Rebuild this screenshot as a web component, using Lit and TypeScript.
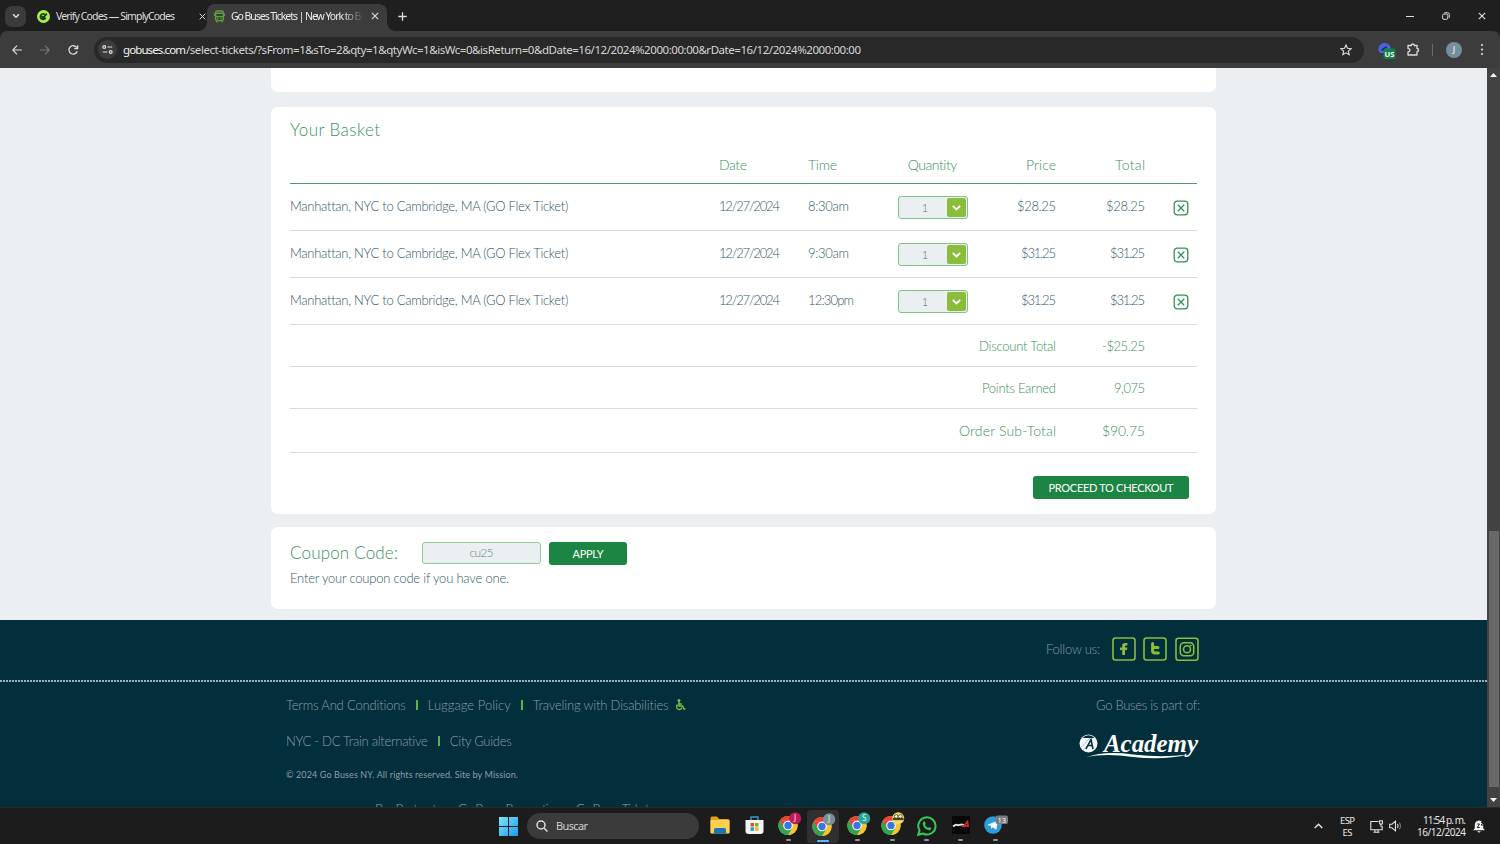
import { LitElement, html, svg, css } from "lit";
import { customElement, property } from "lit/decorators.js";

/** Inline text tracked so that it occupies a given advance width. */
@customElement("fit-text")
class FitText extends LitElement {
  @property({ type: Number }) w = 0;
  static styles = css`
    :host { display: inline-block; white-space: nowrap; flex: none; }
  `;
  render() { return html`<slot></slot>`; }
  firstUpdated() {
    const n = (this.textContent || "").trim().length;
    if (!this.w || n < 2) return;
    const natural = this.getBoundingClientRect().width;
    const ls = (this.w - natural) / (n - 1);
    this.style.letterSpacing = ls.toFixed(3) + "px";
    this.style.marginRight = (-ls).toFixed(3) + "px";
  }
}

const cross = svg`<path d="M1 1L9 9M9 1L1 9" stroke="currentColor" stroke-width="1.4" fill="none"/>`;

@customElement("browser-chrome")
class BrowserChrome extends LitElement {
  static styles = css`
    :host { display: block; height: 68px; flex: none; background: #1f1f1f; color: #dedede;
      font: 10.5px "Noto Sans", "Open Sans", sans-serif; }
    svg { display: block; flex: none; }
    .tabs { display: flex; height: 31px; align-items: center; padding-left: 5px; box-sizing: border-box; }
    .search { width: 21px; height: 21px; border-radius: 7px; background: #3b3b3b; display: grid; place-items: center; margin-top: 1px; }
    .tab { display: flex; align-items: center; height: 31px; padding-top: 1px; box-sizing: border-box; }
    .one { width: 180px; padding-left: 11px; }
    .one svg:first-child { margin-right: 6px; }
    .sp { flex: 1; }
    .two { width: 180px; height: 27px; margin-top: 4px; padding: 0 8px 3px 7px; background: #3c3c3c; border-radius: 8px 8px 0 0; margin-left: 1px; position: relative; }
    .two::before, .two::after { content: ""; position: absolute; bottom: 0; width: 8px; height: 8px; }
    .two::before { left: -8px; background: radial-gradient(circle at 0 0, transparent 7.5px, #3c3c3c 8px); }
    .two::after { right: -8px; background: radial-gradient(circle at 100% 0, transparent 7.5px, #3c3c3c 8px); }
    .title { width: 133px; overflow: hidden; margin-left: 6px; color: #ececec;
      -webkit-mask-image: linear-gradient(90deg, #000 112px, transparent 132px); }
    .plus { margin-left: 11px; margin-top: 1px; }
    .win { display: flex; align-items: center; gap: 28px; padding-right: 14px; }
    .bar { display: flex; height: 37px; background: #3c3c3c; align-items: center; border-radius: 7px 7px 0 0; padding-left: 12px; box-sizing: border-box; }
    .nav { display: flex; gap: 18px; }
    .omni { display: flex; align-items: center; height: 26px; width: 1270px; box-sizing: border-box; border-radius: 13px; background: #282828; margin-left: 15px; padding: 0 12px 0 4px; font-size: 11.5px; color: #d6d6d6; }
    .site { width: 19px; height: 19px; border-radius: 50%; background: #3c3c3c; display: grid; place-items: center; margin-right: 6px; }
    .host { color: #f4f4f4; }
    .ext { margin-left: 14px; }
    .puz { margin-left: 11px; }
    .sep { width: 1px; height: 12px; background: #6b6b6b; margin-left: 12px; }
    .me { width: 16px; height: 16px; border-radius: 50%; background: #758f9f; color: #fff; font-size: 9px; line-height: 16px; text-align: center; margin-left: 13px; }
    .dots { margin-left: 18px; }
  `;
  render() {
    return html`
      <div class="tabs">
        <div class="search"><svg width="8" height="6" viewBox="0 0 8 6"><path d="M1 1.2L4 4.2L7 1.2" stroke="#ddd" stroke-width="1.5" fill="none"/></svg></div>
        <div class="tab one">
          <svg width="13" height="13" viewBox="0 0 13 13"><circle cx="6.5" cy="6.5" r="6.5" fill="#a8f04d"/><path d="M7.6 4.4A2.7 2.7 0 1 0 8.6 7.7M4.7 6.2L6.2 7.7L9.8 3.6" stroke="#1c3312" stroke-width="1.7" fill="none"/></svg>
          <fit-text w="119">Verify Codes — SimplyCodes</fit-text><span class="sp"></span>
          <svg width="7" height="7" viewBox="0 0 10 10">${cross}</svg>
        </div>
        <div style="" class="gap"></div>
        <div class="tab two" id="active">
          <svg width="11" height="13" viewBox="0 0 11 13" fill="none" stroke="#5f9f38" stroke-width="1.4"><rect x="1.6" y="1" width="7.8" height="9.6" rx="1.6"/><path d="M1.6 3.2H9.4M1.6 6.6H9.4M.4 3.5V6M10.6 3.5V6M3 10.6V12.6M8 10.6V12.6M3.2 8.7H4.4M6.6 8.7H7.8"/></svg>
          <div class="title"><fit-text w="153">Go Buses Tickets | New York to Boston</fit-text></div><span class="sp"></span>
          <svg width="8" height="8" viewBox="0 0 10 10">${cross}</svg>
        </div>
        <svg class="plus" width="9" height="9" viewBox="0 0 9 9"><path d="M4.5 .3V8.7M.3 4.5H8.7" stroke="#ddd" stroke-width="1.3"/></svg>
        <span class="sp"></span>
        <div class="win">
          <svg width="8" height="8" viewBox="0 0 8 8"><path d="M0 4.5H8" stroke="#ddd"/></svg>
          <svg width="8" height="8" viewBox="0 0 8 8" fill="none" stroke="#ddd"><rect x=".6" y="2.1" width="5.2" height="5.2" rx="1.2"/><path d="M2.3 .7H5.6Q7.3 .7 7.3 2.4V5.7"/></svg>
          <svg width="8" height="8" viewBox="0 0 10 10">${cross}</svg>
        </div>
      </div>
      <div class="bar">
        <div class="nav">
          <svg width="10" height="10" viewBox="0 0 10 10" fill="none" stroke="#ddd" stroke-width="1.2"><path d="M10 5H.8M5 .7L.8 5L5 9.3"/></svg>
          <svg width="10" height="10" viewBox="0 0 10 10" fill="none" stroke="#777" stroke-width="1.2"><path d="M0 5H9.2M5 .7L9.2 5L5 9.3"/></svg>
          <svg width="11" height="10" viewBox="0 0 11 10" fill="none" stroke="#ddd" stroke-width="1.3"><path d="M8.7 2.6A4.2 4.2 0 1 0 9.2 6.2M9.6 .2V3.6H6.2"/></svg>
        </div>
        <div class="omni">
          <div class="site"><svg width="11" height="9" viewBox="0 0 11 9" fill="none" stroke="#ddd" stroke-width="1.2"><circle cx="2.2" cy="2" r="1.4"/><path d="M5.3 2H10.2M.8 7H5.4"/><circle cx="8.7" cy="7" r="1.4"/></svg></div>
          <fit-text w="63" class="host">gobuses.com</fit-text><fit-text w="675">/select-tickets/?sFrom=1&amp;sTo=2&amp;qty=1&amp;qtyWc=1&amp;isWc=0&amp;isReturn=0&amp;dDate=16/12/2024%2000:00:00&amp;rDate=16/12/2024%2000:00:00</fit-text>
          <span class="sp"></span>
          <svg width="12" height="12" viewBox="0 0 12 12"><path d="M6 1L7.5 4.3L11.1 4.7L8.4 7.1L9.2 10.7L6 8.8L2.8 10.7L3.6 7.1L.9 4.7L4.5 4.3Z" fill="none" stroke="#ddd" stroke-width="1.1"/></svg>
        </div>
        <svg class="ext" width="18" height="18" viewBox="0 0 18 18"><path d="M.5 9.5A6.3 6.3 0 0 1 12.9 7L11 12H2Z" fill="#4a63e0"/><path d="M4 9.5Q6 6.3 9 6.3" stroke="#242a4a" stroke-width="1.6" fill="none"/><rect x="5.5" y="7.5" width="12" height="10.5" rx="2" fill="#12804a"/><text x="11.5" y="15.7" text-anchor="middle" font-size="7.5" font-weight="700" fill="#fff">US</text></svg>
        <svg class="puz" width="13" height="13" viewBox="0 0 13 13"><path d="M1 2.5H4.3A1.5 1.5 0 0 1 7.3 2.5H10V5.5A1.5 1.5 0 0 1 10 8.6V12H1V9Q3 8.6 3 7.2Q3 5.8 1 5.4Z" fill="none" stroke="#ddd" stroke-width="1.3" stroke-linejoin="round"/></svg>
        <div class="sep"></div><div class="me">J</div>
        <svg class="dots" width="4" height="13" viewBox="0 0 4 13" fill="#ddd"><circle cx="2" cy="2" r="1.1"/><circle cx="2" cy="6.5" r="1.1"/><circle cx="2" cy="11" r="1.1"/></svg>
      </div>`;
  }
}

const tickets = [
  { time: "8:30am", tw: 41, price: "$28.25", pw: 39 },
  { time: "9:30am", tw: 41, price: "$31.25", pw: 35 },
  { time: "12:30pm", tw: 46, price: "$31.25", pw: 35 },
];

@customElement("basket-page")
class BasketPage extends LitElement {
  static styles = css`
    :host { display: flex; flex-direction: column; width: 1487px; height: 739px; overflow: hidden; background: #ebeff2; color: #32586a;
      font: 300 13px/18px Lato, "Open Sans", sans-serif; }
    svg { display: block; flex: none; }
    .card { width: 945px; margin-left: 271px; background: #fff; border-radius: 7px; box-sizing: border-box; padding: 0 19px; flex: none; }
    .prev { height: 24px; border-radius: 0 0 7px 7px; }
    .basket { height: 407px; margin-top: 15px; padding-top: 13px; }
    .coupon { height: 82px; margin-top: 13px; padding-top: 14px; }
    .h { font-size: 17px; line-height: 20px; color: #3b8f60; }
    .row { display: grid; grid-template-columns: 429px 89px 90px 69px 89px 89px 52px; height: 47px; box-sizing: border-box; border-bottom: 1px solid #d9dadb; align-items: center; }
    .row.head { height: 44px; margin-top: 0; border-color: #49996a; color: #3b8f60; font-size: 14px; padding-bottom: 0; }
    .row > * { padding-bottom: 2px; }
    .head > * { padding: 6px 0 0; }
    .r { text-align: right; } .c { text-align: center; }
    .row > .q { padding: 0; }
    .qty { display: flex; height: 23px; width: 70px; border: 1px solid #7cc588; border-radius: 3px; box-sizing: border-box; background: #ebeff2; padding: 1px; font-size: 11px; line-height: 20px; color: #3f7d6a; }
    .qty b { flex: 1; font-weight: 300; text-align: center; padding-left: 3px; }
    .qty i { width: 19px; background: #8cbd3a; display: grid; place-items: center; border-radius: 2px; padding-top: 1px; box-sizing: border-box; }
    .row > .del { justify-self: center; padding: 1px 0 0 19px; }
    .sum { display: grid; grid-template-columns: 766px 89px 52px; height: 42px; box-sizing: border-box; border-bottom: 1px solid #d9dadb; text-align: right; align-items: center; color: #3b8f60; }
    .sum.s1 { height: 42px; } .sum.big { height: 44px; font-size: 14px; }
    .btn { background: #1c8543; color: #fff; border-radius: 3px; display: grid; place-items: center; font-size: 11px; font-weight: 400; height: 23px; }
    .go { width: 156px; margin: 23px 0 0 743px; }
    .line { display: flex; align-items: center; height: 24px; }
    .code { width: 119px; height: 22px; box-sizing: border-box; border: 1px solid #8fcb98; border-radius: 3px; background: #ebeff2; text-align: center; font-size: 12px; line-height: 20px; margin-left: 24px; color: #5d8e87; }
    .line .btn { width: 78px; margin-left: 8px; margin-top: 1px; }
    .note { margin-top: 4px; line-height: 18px; }
    footer { background: #032e3c; flex: 1; margin-top: 11px; color: #8b9fa8; min-height: 0; }
    .follow { height: 60px; display: flex; align-items: center; box-sizing: border-box; padding: 0 288px 3px 0; justify-content: flex-end; }
    .follow svg { margin-left: 7px; }
    .dotted { height: 2px; background: repeating-linear-gradient(90deg, #9fb3bb 0 2px, transparent 2px 3px); }
    .cols { display: flex; justify-content: space-between; padding: 14px 287px 0 286px; }
    .ln { display: flex; align-items: center; height: 18px; margin-bottom: 18px; }
    .ln hr { width: 2px; height: 10px; background: #5fb347; border: 0; margin: 0 10px; }
    .ln svg { margin-left: 6px; }
    .copy { font-size: 9px; line-height: 14px; margin-top: 1px; font-weight: 400; }
    .cut { display: flex; gap: 15px; padding-left: 89px; margin-top: 19px; line-height: 16px; }
    .part { text-align: right; }
    .logo { margin-top: 17px; }
  `;
  render() {
    const ft = (t: string, w: number) => html`<fit-text w=${w}>${t}</fit-text>`;
    return html`
      <div class="card prev"></div>
      <div class="card basket">
        <div class="h">${ft("Your Basket", 90)}</div>
        <div class="row head"><span></span><span>${ft("Date", 28)}</span><span>${ft("Time", 29)}</span><span class="c">${ft("Quantity", 50)}</span><span class="r">${ft("Price", 30)}</span><span class="r">${ft("Total", 30)}</span></div>
        ${tickets.map((t) => html`<div class="row">
          <span>${ft("Manhattan, NYC to Cambridge, MA (GO Flex Ticket)", 278)}</span>
          <span>${ft("12/27/2024", 61)}</span><span>${ft(t.time, t.tw)}</span>
          <span class="q"><div class="qty"><b>1</b><i><svg width="9" height="6" viewBox="0 0 9 6"><path d="M.8 .9L4.5 4.4L8.2 .9" stroke="#fff" stroke-width="1.8" fill="none"/></svg></i></div></span>
          <span class="r">${ft(t.price, t.pw)}</span><span class="r">${ft(t.price, t.pw)}</span>
          <span class="del"><svg width="16" height="16" viewBox="0 0 16 16" fill="none" stroke="#2f9257" stroke-width="1.3"><rect x="1.2" y="1.2" width="13.6" height="13.6" rx="3"/><path d="M4.8 4.8L11.2 11.2M11.2 4.8L4.8 11.2"/></svg></span>
        </div>`)}
        <div class="sum"><span>${ft("Discount Total", 77)}</span><span>${ft("-$25.25", 43)}</span></div>
        <div class="sum"><span>${ft("Points Earned", 74)}</span><span>${ft("9,075", 31)}</span></div>
        <div class="sum big"><span>${ft("Order Sub-Total", 97)}</span><span>${ft("$90.75", 43)}</span></div>
        <div class="btn go">${ft("PROCEED TO CHECKOUT", 125)}</div>
      </div>
      <div class="card coupon">
        <div class="line"><span class="h">${ft("Coupon Code:", 108)}</span><div class="code">${ft("cu25", 24)}</div><div class="btn">${ft("APPLY", 31)}</div></div>
        <div class="note">${ft("Enter your coupon code if you have one.", 219)}</div>
      </div>
      <footer>
        <div class="follow">${ft("Follow us:", 54)}
          <svg width="24" height="24" viewBox="0 0 24 24" style="margin-left:12px"><rect x="1" y="1" width="22" height="22" rx="2.5" fill="none" stroke="#8cbd3a" stroke-width="1.6"/><path d="M10.2 18V12.9H8V10.4H10.2V8.8Q10.2 6 13 6H15.4V8.5H13.9Q13 8.5 13 9.4V10.4H15.3L15 12.9H13V18Z" fill="#8cbd3a"/></svg>
          <svg width="24" height="24" viewBox="0 0 24 24"><rect x="1" y="1" width="22" height="22" rx="2.5" fill="none" stroke="#8cbd3a" stroke-width="1.6"/><path d="M9.6 6.5V13.7Q9.6 16 12 16H15.3M9.6 10.4H15" stroke="#8cbd3a" stroke-width="3" fill="none" stroke-linecap="round"/></svg>
          <svg width="25" height="24" viewBox="0 0 25 24" fill="none" stroke="#8cbd3a"><rect x="2" y="1.3" width="22" height="22" rx="2.5" stroke-width="1.6"/><rect x="6.3" y="5.7" width="13.4" height="13" rx="3.5" stroke-width="1.6"/><circle cx="13" cy="12.2" r="3.5" stroke-width="1.6"/><circle cx="16.8" cy="8.6" r=".6"/></svg>
        </div>
        <div class="dotted"></div>
        <div class="cols">
          <div>
            <div class="ln">${ft("Terms And Conditions", 120)}<hr>${ft("Luggage Policy", 83)}<hr>${ft("Traveling with Disabilities", 136)}<svg width="11" height="12" viewBox="0 0 11 12" fill="none" stroke="#7fc242" stroke-width="1.4"><circle cx="4" cy="1.6" r=".8" fill="#7fc242"/><path d="M4 3V7H7.6L9 10H10.4M4 5H6.8M2.6 5.6A2.8 2.8 0 1 0 7 8.8"/></svg></div>
            <div class="ln">${ft("NYC - DC Train alternative", 142)}<hr>${ft("City Guides", 62)}</div>
            <div class="copy">${ft("© 2024 Go Buses NY. All rights reserved. Site by Mission.", 232)}</div>
            <div class="cut">${ft("Bus Boston to", 68)}${ft("Go Buses Reservation", 103)}${ft("Go Buses Tickets", 78)}</div>
          </div>
          <div class="part">${ft("Go Buses is part of:", 104)}
            <svg class="logo" width="122" height="32" viewBox="0 0 122 32">
              <circle cx="10.5" cy="12.5" r="9" fill="#f4f8fa"/><path d="M3.5 16L13 6M5.5 18.5L14 9" stroke="#8fa5af" stroke-width=".7"/><path d="M4.5 7A8 8 0 0 1 16.5 7Z" fill="#032e3c"/><path d="M8 18L13 8.5L15 18M10 14.5H14.5" stroke="#032e3c" stroke-width="1.6" fill="none"/>
              <text x="26" y="21" textLength="94" lengthAdjust="spacingAndGlyphs" font-family="Liberation Serif, serif" font-weight="700" font-style="italic" font-size="25" fill="#fff">Academy</text>
              <path d="M8 26.5Q26 19.5 55 23.5Q85 27 110 23.5Q86 29.5 55 26Q26 22 8 26.5Z" fill="#fff"/>
            </svg>
          </div>
        </div>
      </footer>`;
  }
}

const chromeIcon = (badge: string, letter: string) => html`<svg width="26" height="26" viewBox="0 0 26 26">
  <circle cx="10" cy="14.5" r="9.6" fill="#f9c52c"/>
  <path d="M1.7 9.7A9.6 9.6 0 0 1 18.3 9.7H10Z" fill="#e5443a"/>
  <path d="M1.7 9.7A9.6 9.6 0 0 0 10 24.1L14.2 17Q10 21 5.9 17Z" fill="#35a452"/>
  <path d="M10 9.7H18.3A9.6 9.6 0 0 1 10 24.1L14.2 17Z" fill="#f9c52c"/>
  <path d="M1.7 9.7L5.9 17L10 9.7Z" fill="#e5443a"/><path d="M1.7 9.7A9.6 9.6 0 0 0 10 24.1L14.2 17L5.9 17Z" fill="#35a452"/>
  <circle cx="10" cy="14.5" r="4.8" fill="#fff"/><circle cx="10" cy="14.5" r="3.7" fill="#3478e5"/>
  <circle cx="17.2" cy="7.2" r="6" fill=${badge}/><text x="17.2" y="10.2" text-anchor="middle" font-size="8" fill="#e6eef0">${letter}</text>
  ${letter ? "" : svg`<path d="M11.8 8H22.6" stroke="#4a3c20" stroke-width="2.2"/><circle cx="15.2" cy="5.4" r="1.8" fill="#fff" stroke="#3b331d" stroke-width=".8"/><circle cx="19.3" cy="5.4" r="1.8" fill="#fff" stroke="#3b331d" stroke-width=".8"/>`}
</svg>`;

@customElement("task-bar")
class TaskBar extends LitElement {
  static styles = css`
    :host { display: flex; height: 37px; flex: none; background: #1c1c1c; color: #e6e6e6; font: 10px/12px "Noto Sans", "Open Sans", sans-serif; box-sizing: border-box; padding-left: 499px; border-top: 1px solid #292b2b; align-items: center; }
    svg { display: block; flex: none; }
    .find { display: flex; align-items: center; width: 172px; height: 26px; border-radius: 13px; background: #3b3b3b; margin: 0 4px 0 9px; padding-left: 9px; box-sizing: border-box; gap: 8px; font-size: 11px; color: #d0d0d0; }
    .app { width: 34.4px; height: 36px; flex: none; display: flex; flex-direction: column; align-items: center; justify-content: space-between; padding: 3px 0 3px; box-sizing: border-box; }
    .app.plain { padding-top: 8px; }
    .app.on { background: radial-gradient(#333, #303030); background: #303030; height: 33px; border-radius: 4px; padding: 2px 0 1px; width: 32px; margin: 0 1.2px; }
    .app::after { content: ""; width: 5px; height: 2px; border-radius: 1px; background: #989898; }
    .app.on::after { width: 12px; background: #5cb8f0; }
    .app.none::after { display: none; }
    .app .c { margin-left: 4px; }
    .sp { flex: 1; }
    .lang { margin: 0 15px 0 17px; text-align: center; font-size: 9.5px; padding-top: 1px; }
    .clock { text-align: right; margin: 0 7px 0 14px; }
    .spk { margin-left: 6px; }
    .bell { margin-right: 15px; }
  `;
  render() {
    return html`
      <svg width="19" height="19" viewBox="0 0 19 19"><defs><linearGradient id="w" x2="1" y2="1"><stop stop-color="#7fe3fa"/><stop offset="1" stop-color="#1b9ce8"/></linearGradient></defs><path d="M0 0H9V9H0ZM10 0H19V9H10ZM0 10H9V19H0ZM10 10H19V19H10Z" fill="url(#w)"/></svg>
      <div class="find"><svg width="12" height="12" viewBox="0 0 12 12" fill="none" stroke="#ddd" stroke-width="1.5"><circle cx="5" cy="5" r="4"/><path d="M8 8L11.5 11.5"/></svg><fit-text w="32">Buscar</fit-text></div>
      <div class="app plain none"><svg width="20" height="18" viewBox="0 0 20 18"><path d="M.5 2Q.5 .5 2 .5H7L9 3H18Q19.5 3 19.5 4.5V17H.5Z" fill="#e0a31d"/><rect x=".5" y="4" width="19" height="13.5" rx="1" fill="#fdcf52"/><path d="M4 17.5V13.5Q4 12 5.5 12H14.5Q16 12 16 13.5V17.5Z" fill="#1976b8"/></svg></div>
      <div class="app plain none"><svg width="19" height="18" viewBox="0 0 19 18"><path d="M6 4V1H13V4" stroke="#2e9ad0" stroke-width="1.4" fill="none"/><path d="M.5 4H18.5V15Q18.5 18 15.5 18H3.5Q.5 18 .5 15Z" fill="#f3f5f7"/><path d="M5.5 7H9V10.5H5.5Z" fill="#e65028"/><path d="M10 7H13.5V10.5H10Z" fill="#7cb518"/><path d="M5.5 11.3H9V14.8H5.5Z" fill="#1f9be0"/><path d="M10 11.3H13.5V14.8H10Z" fill="#f6b51d"/></svg></div>
      <div class="app"><div class="c">${chromeIcon("#c2185b", "J")}</div></div>
      <div class="app on"><div class="c">${chromeIcon("#78909c", "J")}</div></div>
      <div class="app"><div class="c">${chromeIcon("#26a69a", "S")}</div></div>
      <div class="app"><div class="c">${chromeIcon("#f0dc5a", "")}</div></div>
      <div class="app plain"><svg width="20" height="20" viewBox="0 0 20 20"><path d="M1.2 18.8L2.5 14.3A8.6 8.6 0 1 1 5.8 17.5Z" fill="none" stroke="#2ecb5b" stroke-width="2"/><path d="M6.2 6.2Q7.3 4.6 8 6L8.7 7.6L7.9 8.9Q9 11 11.2 12L12.4 10.9L14.3 11.9Q14.2 14.2 12 14.2Q7.2 13.6 5.8 8.6Q5.6 7.2 6.2 6.2Z" fill="#2ecb5b"/></svg></div>
      <div class="app plain"><svg width="18" height="18" viewBox="0 0 18 18"><rect width="18" height="18" fill="#080808"/><path d="M1 10.5Q4 7.8 6 9.2L10 8.5L12.5 9.5" stroke="#ddd" stroke-width="1.8" fill="none"/><path d="M11.5 11L15.5 5.5L16.2 11M9.5 10H17" stroke="#d92a2a" stroke-width="1.6" fill="none"/></svg></div>
      <div class="app"><svg width="26" height="24" viewBox="0 0 26 24"><circle cx="11" cy="14" r="8.8" fill="#2b9fda"/><path d="M5.2 14L16 9.6L14.2 18.7L10.6 16.2L9 17.8V15Z" fill="#fff"/><rect x="13.5" y="4.5" width="12.5" height="8.5" rx="2" fill="#777b7e"/><text x="19.7" y="11.6" text-anchor="middle" font-size="7.5" fill="#fff">13</text></svg></div>
      <span class="sp"></span>
      <svg width="9" height="6" viewBox="0 0 9 6"><path d="M.7 5L4.5 1.2L8.3 5" stroke="#e6e6e6" stroke-width="1.4" fill="none"/></svg>
      <div class="lang"><fit-text w="15">ESP</fit-text><br><fit-text w="10">ES</fit-text></div>
      <svg width="13" height="13" viewBox="0 0 13 13" fill="none" stroke="#e2e2e2" stroke-width="1.1"><path d="M8.5 1.5H.8V9.8H12.2V6M3.5 12.2H9.5M5 10V12M8 10V12"/><path d="M9.6 .8H12.4V3.5Q11 5 9.6 3.5ZM11 4V7"/></svg>
      <svg class="spk" width="14" height="12" viewBox="0 0 14 12" fill="none" stroke="#e2e2e2" stroke-width="1.1"><path d="M.7 4.2H3L6.5 1.2V10.8L3 7.8H.7Z"/><path d="M8.5 4Q9.8 6 8.5 8"/><path d="M10.3 2.6Q12.6 6 10.3 9.4" stroke="#777"/></svg>
      <div class="clock"><fit-text w="43">11:54 p. m.</fit-text><br><fit-text w="49">16/12/2024</fit-text></div>
      <svg class="bell" width="12" height="13" viewBox="0 0 12 13"><path d="M6 .5Q10.2 1 10.2 5V8.2L11.8 10.3H.2L1.8 8.2V5Q1.8 1 6 .5ZM4.2 11.2H7.8Q6 13.6 4.2 11.2Z" fill="#f0f0f0"/><path d="M4.3 4H6.5L4.3 7.5H6.7M8 2.5H10.5L8 5H10.5" stroke="#222" fill="none"/></svg>`;
  }
}

@customElement("app-root")
class AppRoot extends LitElement {
  static styles = css`
    :host { display: flex; flex-direction: column; width: 1500px; height: 844px; overflow: hidden; }
    .view { display: flex; height: 739px; flex: none; }
    .bar { width: 13px; background: #424242; display: flex; flex-direction: column; align-items: center; justify-content: space-between; padding: 5px 0; box-sizing: border-box; }
    .thumb { width: 10px; height: 256px; background: #686868; margin-top: 443px; margin-bottom: 0; }
    svg { display: block; }
  `;
  render() {
    return html`<browser-chrome></browser-chrome>
      <div class="view"><basket-page></basket-page>
        <div class="bar">
          <svg width="7" height="4" viewBox="0 0 7 4"><path d="M0 4L3.5 0L7 4Z" fill="#f0f0f0"/></svg>
          <div class="thumb"></div>
          <svg width="7" height="4" viewBox="0 0 7 4"><path d="M0 0H7L3.5 4Z" fill="#f0f0f0"/></svg>
        </div>
      </div>
      <task-bar></task-bar>`;
  }
}
